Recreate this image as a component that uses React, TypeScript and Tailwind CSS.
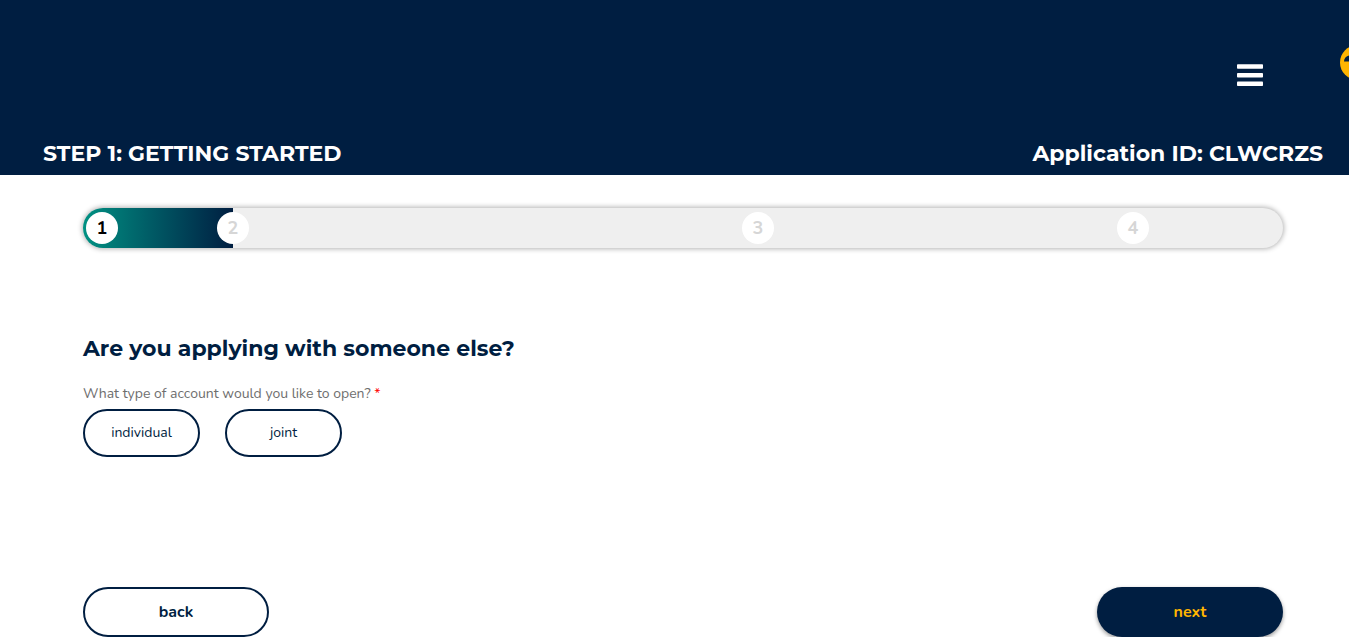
const steps = [
  { label: "1", place: "left-[3px]", tone: "text-black" },
  { label: "2", place: "left-[12.5%] -translate-x-1/2", tone: "text-[#d6d6d6]" },
  { label: "3", place: "left-[56.25%] -translate-x-1/2", tone: "text-[#d6d6d6]" },
  { label: "4", place: "left-[87.5%] -translate-x-1/2", tone: "text-[#d6d6d6]" },
];

function Header() {
  return (
    <header className="relative mr-[17px] overflow-hidden bg-[#001e41] pt-[60px] pr-[26px] pb-[5px] pl-[43px] font-['Montserrat','Inter',sans-serif] text-white">
      <div className="flex justify-end pr-[58px]">
        <button type="button" aria-label="Open menu" className="flex h-[30px] w-[30px] items-center justify-center">
          <svg width="26" height="22" viewBox="0 0 26 22" fill="currentColor" aria-hidden="true">
            <rect width="26" height="4.600" rx="0.8" y="0.2" />
            <rect width="26" height="4.600" rx="0.8" y="8.900" />
            <rect width="26" height="4.600" rx="0.8" y="17.400" />
          </svg>
        </button>
      </div>
      <button type="button" aria-label="Help" className="absolute top-[45px] -right-[26px]">
        <svg width="35" height="35" viewBox="0 0 35 35" aria-hidden="true">
          <circle cx="17.5" cy="17.5" r="17.5" fill="#ffb500" />
          <path d="M4 16.5C4 13 6.500 11 9.500 10.500V16.500Z" fill="#001e41" />
        </svg>
      </button>
      <div className="mt-12 flex items-center justify-between text-[22px] leading-8 font-bold">
        <h1>STEP 1: GETTING STARTED</h1>
        <p>Application ID: CLWCRZS</p>
      </div>
    </header>
  );
}

function Progress() {
  return (
    <div className="relative h-10 rounded-full bg-[#efefef] shadow-[0_0_5px_1px_rgba(0,0,0,0.3)]">
      <div className="h-full w-[12.5%] rounded-l-full bg-linear-to-r from-[#009182] to-[#001e41]" />
      <ol>
        {steps.map((step) => (
          <li
            key={step.label}
            className={`absolute top-1 flex size-8 items-center justify-center rounded-full bg-white text-[18px] font-bold ${step.place} ${step.tone}`}
          >
            {step.label}
          </li>
        ))}
      </ol>
    </div>
  );
}

function Choice({ text }: { text: string }) {
  return (
    <button
      type="button"
      className="h-12 w-[117px] rounded-full border-2 border-[#001e41] pb-0.5 text-[14px] text-[#001e41]"
    >
      {text}
    </button>
  );
}

export default function App() {
  return (
    <div className="bg-white font-['Nunito','Lato',sans-serif]">
      <Header />
      <main className="mx-auto max-w-[1200px] pt-[33px]">
        <Progress />
        <h2 className="mt-[85px] font-['Montserrat','Inter',sans-serif] text-[22px] leading-8 font-bold text-[#001e41]">
          Are you applying with someone else?
        </h2>
        <div role="group" aria-labelledby="account-type" className="mt-[19px]">
          <p id="account-type" className="text-[14px] leading-5 text-[#6e6e6e]">
            What type of account would you like to open? <span className="text-[#ff0000]">*</span>
          </p>
          <div className="mt-[5px] flex gap-[25px]">
            <Choice text="individual" />
            <Choice text="joint" />
          </div>
        </div>
        <div className="mt-[130px] flex justify-between text-[16px] font-bold">
          <button type="button" className="h-[50px] w-[186px] rounded-full border-2 border-[#001e41] text-[#001e41]">
            back
          </button>
          <button
            type="button"
            className="h-[50px] w-[186px] rounded-full bg-[#001e41] text-[#ffb500] shadow-[0_2px_4px_rgba(0,0,0,0.4)]"
          >
            next
          </button>
        </div>
      </main>
    </div>
  );
}
